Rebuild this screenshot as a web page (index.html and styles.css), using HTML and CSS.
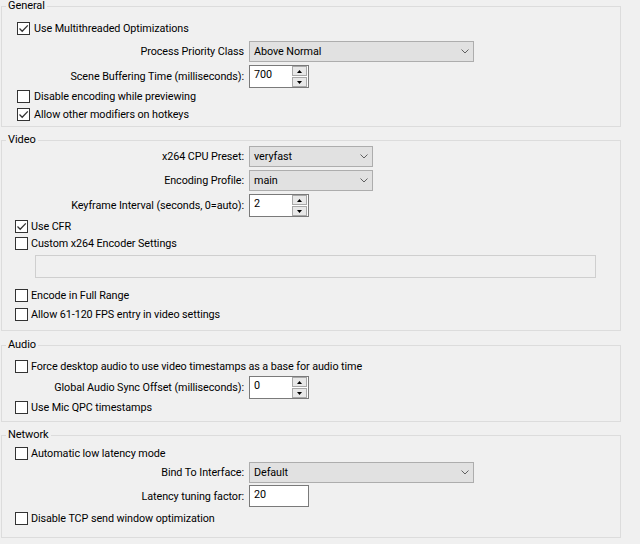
FILE: index.html
```html
<!DOCTYPE html>
<html>
<head>
<meta charset="utf-8">
<link rel="stylesheet" href="styles.css">
</head>
<body>
<div class="page">

  <fieldset class="group general">
    <legend>General</legend>
    <label class="check r-g1 indent-g"><span class="box on"><svg viewBox="0 0 11 11" width="11" height="11"><path d="M1.5 5.5 L4.2 8.2 L9.8 2.4" /></svg></span>Use Multithreaded Optimizations</label>
    <div class="form-row r-g2"><span class="lbl">Process Priority Class</span><div class="combo wide"><span>Above Normal</span><svg class="chev" viewBox="0 0 8 5" width="8" height="5"><path d="M0.5 0.5 L4 4 L7.5 0.5"/></svg></div></div>
    <div class="form-row r-g3"><span class="lbl">Scene Buffering Time (milliseconds):</span><div class="spin"><span class="val">700</span><span class="btns"><span class="sb"><svg viewBox="0 0 5 3" width="5" height="3"><path d="M0 3 L2.5 0 L5 3Z"/></svg></span><span class="sb"><svg viewBox="0 0 5 3" width="5" height="3"><path d="M0 0 L2.5 3 L5 0Z"/></svg></span></span></div></div>
    <label class="check r-g4 indent-g"><span class="box"></span>Disable encoding while previewing</label>
    <label class="check r-g5 indent-g"><span class="box on"><svg viewBox="0 0 11 11" width="11" height="11"><path d="M1.5 5.5 L4.2 8.2 L9.8 2.4" /></svg></span>Allow other modifiers on hotkeys</label>
  </fieldset>

  <fieldset class="group video">
    <legend>Video</legend>
    <div class="form-row r-v1"><span class="lbl">x264 CPU Preset:</span><div class="combo narrow"><span>veryfast</span><svg class="chev" viewBox="0 0 8 5" width="8" height="5"><path d="M0.5 0.5 L4 4 L7.5 0.5"/></svg></div></div>
    <div class="form-row r-v2"><span class="lbl">Encoding Profile:</span><div class="combo narrow"><span>main</span><svg class="chev" viewBox="0 0 8 5" width="8" height="5"><path d="M0.5 0.5 L4 4 L7.5 0.5"/></svg></div></div>
    <div class="form-row r-v3"><span class="lbl">Keyframe Interval (seconds, 0=auto):</span><div class="spin"><span class="val">2</span><span class="btns"><span class="sb"><svg viewBox="0 0 5 3" width="5" height="3"><path d="M0 3 L2.5 0 L5 3Z"/></svg></span><span class="sb"><svg viewBox="0 0 5 3" width="5" height="3"><path d="M0 0 L2.5 3 L5 0Z"/></svg></span></span></div></div>
    <label class="check r-v4"><span class="box on"><svg viewBox="0 0 11 11" width="11" height="11"><path d="M1.5 5.5 L4.2 8.2 L9.8 2.4" /></svg></span>Use CFR</label>
    <label class="check r-v5"><span class="box"></span>Custom x264 Encoder Settings</label>
    <div class="textfield r-v6"></div>
    <label class="check r-v7"><span class="box"></span>Encode in Full Range</label>
    <label class="check r-v8"><span class="box"></span>Allow 61-120 FPS entry in video settings</label>
  </fieldset>

  <fieldset class="group audio">
    <legend>Audio</legend>
    <label class="check r-a1"><span class="box"></span>Force desktop audio to use video timestamps as a base for audio time</label>
    <div class="form-row r-a2"><span class="lbl">Global Audio Sync Offset (milliseconds):</span><div class="spin"><span class="val">0</span><span class="btns"><span class="sb"><svg viewBox="0 0 5 3" width="5" height="3"><path d="M0 3 L2.5 0 L5 3Z"/></svg></span><span class="sb"><svg viewBox="0 0 5 3" width="5" height="3"><path d="M0 0 L2.5 3 L5 0Z"/></svg></span></span></div></div>
    <label class="check r-a3"><span class="box"></span>Use Mic QPC timestamps</label>
  </fieldset>

  <fieldset class="group network">
    <legend>Network</legend>
    <label class="check r-n1"><span class="box"></span>Automatic low latency mode</label>
    <div class="form-row r-n2"><span class="lbl">Bind To Interface:</span><div class="combo wide"><span>Default</span><svg class="chev" viewBox="0 0 8 5" width="8" height="5"><path d="M0.5 0.5 L4 4 L7.5 0.5"/></svg></div></div>
    <div class="form-row r-n3"><span class="lbl">Latency tuning factor:</span><div class="lineedit"><span class="val">20</span></div></div>
    <label class="check r-n4"><span class="box"></span>Disable TCP send window optimization</label>
  </fieldset>

</div>
</body>
</html>
```

FILE: styles.css
```css
html, body {
  margin: 0;
  padding: 0;
  background: #f0f0f0;
}

body {
  font-family: Roboto, "Noto Sans", sans-serif;
  font-size: 10.8px;
  letter-spacing: -0.08px;
  color: #000;
}

.page {
  width: 640px;
  height: 544px;
  overflow: hidden;
}

.group {
  box-sizing: border-box;
  width: 620px;
  margin: 0 0 0 1px;
  padding: 0;
  border: 1px solid #dcdcdc;
  display: flex;
  flex-direction: column;
  min-width: 0;
}

.group legend {
  margin-left: 4px;
  padding: 0 2px;
  line-height: 12px;
  height: 12px;
  font-size: 11px;
}

.general { padding-top: 8px; padding-bottom: 3px; }
.video { margin-top: 7px; padding-bottom: 7px; }
.audio { margin-top: 8px; padding-top: 7px; padding-bottom: 5px; }
.network { margin-top: 7px; padding-top: 4px; padding-bottom: 10px; }

/* checkbox rows */
.check {
  display: flex;
  align-items: center;
  height: 17px;
  padding-left: 13px;
  gap: 3px;
  white-space: nowrap;
}
.check.indent-g { padding-left: 15px; gap: 4px; }

.box {
  box-sizing: border-box;
  width: 13px;
  height: 13px;
  background: #fff;
  border: 1px solid #333;
  display: flex;
  align-items: center;
  justify-content: center;
  flex: none;
}
.box svg path {
  fill: none;
  stroke: #333;
  stroke-width: 1.3;
}

/* label + field rows */
.form-row {
  display: grid;
  grid-template-columns: 242px auto;
  column-gap: 5px;
  align-items: center;
  justify-content: start;
  white-space: nowrap;
}
.form-row .lbl { text-align: right; }

.combo {
  box-sizing: border-box;
  height: 21px;
  background: #e1e1e1;
  border: 1px solid #adadad;
  display: flex;
  align-items: center;
  justify-content: space-between;
  padding: 0 4px 0 4px;
}
.combo.wide { width: 225px; }
.combo.narrow { width: 124px; }
.chev path { fill: none; stroke: #606060; stroke-width: 1; }

.spin, .lineedit {
  box-sizing: border-box;
  width: 60px;
  height: 23px;
  background: #fff;
  border: 1px solid #7a7a7a;
  display: flex;
  align-items: flex-start;
  justify-content: space-between;
  padding: 0 1px 0 4px;
}
.lineedit { height: 22px; }
.val { line-height: 17px; }

.btns {
  display: flex;
  flex-direction: column;
  gap: 1px;
}
.sb {
  box-sizing: border-box;
  width: 15px;
  height: 10px;
  background: #e8e8e8;
  border: 1px solid #a8a8a8;
  display: flex;
  align-items: center;
  justify-content: center;
}
.sb svg path { fill: #000; }

.textfield {
  box-sizing: border-box;
  width: 561px;
  height: 23px;
  margin-left: 33px;
  background: #f0f0f0;
  border: 1px solid #cfcfcf;
}

/* vertical rhythm */
.r-g2 { margin-top: 4px; }
.r-g3 { margin-top: 3px; }
.r-g4 { margin-top: 0; }
.r-g5 { margin-top: 1px; }

.r-v2 { margin-top: 3px; }
.r-v3 { margin-top: 3px; }
.r-v4 { margin-top: 1px; }
.r-v5 { margin-top: 0; }
.r-v6 { margin-top: 3px; }
.r-v7 { margin-top: 9px; }
.r-v8 { margin-top: 2px; }

.r-a2 { margin-top: 1px; }
.r-a3 { margin-top: 0; }

.r-n2 { margin-top: 0; }
.r-n3 { margin-top: 2px; }
.r-n4 { margin-top: 3px; }
```
